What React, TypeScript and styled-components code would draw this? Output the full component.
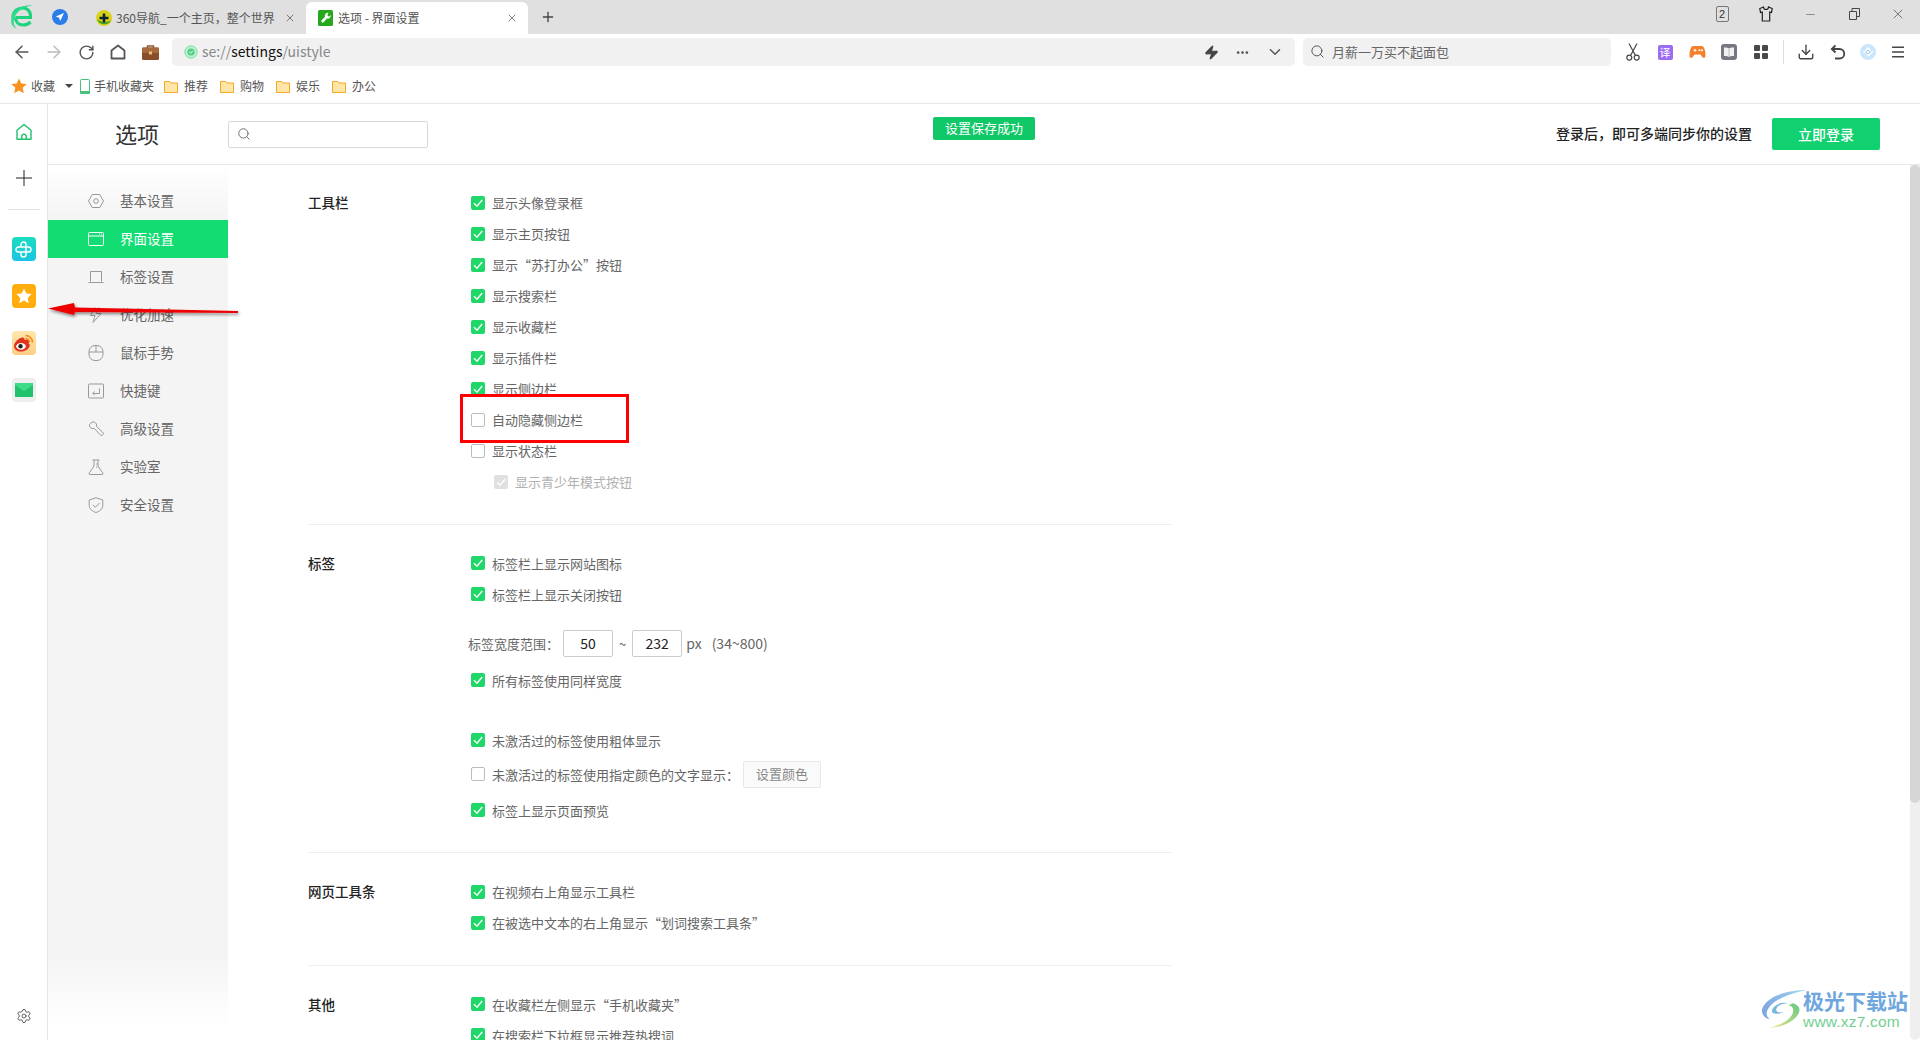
import styled, { createGlobalStyle } from 'styled-components'
import {
  ArrowLeft, ArrowRight, ChevronDown, Download, Ellipsis, Minus, Plus, RotateCw, Search, Settings, X, Zap,
} from 'lucide-react'

const GlobalStyle = createGlobalStyle`
  html, body {
    margin: 0;
    padding: 0;
    height: 1040px;
    overflow: hidden;
    background: #fff;
  }
  body {
    font-family: "Noto Sans CJK SC", "Liberation Sans", sans-serif;
    font-size: 13px;
    color: #666;
  }
  * { box-sizing: border-box; }
`

const Page = styled.div`
  position: relative;
  display: flex;
  flex-direction: column;
  width: 1920px;
  height: 1040px;
  overflow: hidden;
`

/* ---- tab strip ---- */
const TabStrip = styled.div`
  display: flex;
  align-items: flex-end;
  height: 34px;
  flex: none;
  background: #e0e0e0;
  padding-left: 10px;
`
const StripIcon = styled.div<{ $w: number; $mr: number }>`
  display: flex;
  align-items: center;
  justify-content: center;
  height: 34px;
  width: ${p => p.$w}px;
  margin-right: ${p => p.$mr}px;
  flex: none;
`
const Tab = styled.div<{ $active?: boolean }>`
  display: flex;
  align-items: center;
  width: 222px;
  height: 32px;
  flex: none;
  padding: 0 10px 0 12px;
  gap: 4px;
  font-size: 12px;
  line-height: 16px;
  color: #555;
  white-space: nowrap;
  background: ${p => (p.$active ? '#fff' : 'transparent')};
  border-radius: 6px 6px 0 0;
`
const TabTitle = styled.span`
  flex: 1;
  overflow: hidden;
`
const WindowControls = styled.div`
  display: flex;
  margin-left: auto;
  height: 34px;
`
const WindowButton = styled.div`
  display: flex;
  align-items: center;
  justify-content: center;
  width: 44px;
  height: 28px;
  color: #444;
`
const CountBadge = styled.span`
  display: block;
  width: 13px;
  height: 16px;
  border: 1px solid #777;
  border-radius: 2px;
  font-family: "Liberation Sans", sans-serif;
  font-size: 11px;
  line-height: 14px;
  text-align: center;
  color: #333;
`

/* ---- toolbar ---- */
const Toolbar = styled.div`
  display: flex;
  align-items: center;
  height: 36px;
  flex: none;
  padding-left: 6px;
  background: #fff;
`
const ToolSlot = styled.div<{ $w?: number }>`
  display: flex;
  align-items: center;
  justify-content: center;
  width: ${p => p.$w ?? 32}px;
  height: 28px;
  flex: none;
  color: #555;
`
const AddressBar = styled.div`
  display: flex;
  align-items: center;
  width: 1123px;
  height: 28px;
  margin-left: 6px;
  padding: 0 3px 0 12px;
  flex: none;
  background: #f1f1f1;
  border-radius: 5px;
`
const Url = styled.span`
  margin-left: 4px;
  padding-bottom: 2px;
  flex: 1;
  font-size: 14px;
  line-height: 18px;
  color: #888;
`
const UrlHost = styled.span`
  color: #111;
`
const SearchBar = styled.div`
  display: flex;
  align-items: center;
  width: 308px;
  height: 28px;
  margin: 0 6px 0 8px;
  padding: 0 0 1px 7px;
  gap: 7px;
  flex: none;
  background: #f1f1f1;
  border-radius: 5px;
  color: #666;
  font-size: 13px;
`
const ToolDivider = styled.div`
  width: 1px;
  height: 24px;
  margin: 0 6px;
  background: #ddd;
  flex: none;
`
const TranslateTile = styled.span`
  display: block;
  width: 15px;
  height: 15px;
  border-radius: 2px;
  background: #9b6cf3;
  color: #fff;
  font-size: 11px;
  line-height: 15px;
  text-align: center;
`

/* ---- bookmarks ---- */
const BookmarkBar = styled.div`
  display: flex;
  align-items: center;
  height: 34px;
  flex: none;
  padding: 0 0 1px 11px;
  border-bottom: 1px solid #e8e8e8;
  font-size: 12px;
  line-height: 16px;
  color: #555;
`
const Bookmark = styled.div<{ $ml?: number; $gap?: number }>`
  display: flex;
  align-items: center;
  gap: ${p => p.$gap ?? 6}px;
  margin-left: ${p => p.$ml ?? 0}px;
  white-space: nowrap;
`
const Caret = styled.span`
  width: 0;
  height: 0;
  margin-left: 10px;
  border-left: 4px solid transparent;
  border-right: 4px solid transparent;
  border-top: 4px solid #444;
`

/* ---- main frame ---- */
const Frame = styled.div`
  display: flex;
  flex: 1;
  min-height: 0;
`
const Rail = styled.aside`
  display: flex;
  flex-direction: column;
  align-items: center;
  width: 48px;
  flex: none;
  padding-top: 16px;
  border-right: 1px solid #e4e4e4;
`
const RailIcon = styled.div`
  display: flex;
  align-items: center;
  justify-content: center;
  width: 24px;
  height: 24px;
  margin-bottom: 22px;
`
const RailRule = styled.div`
  width: 32px;
  height: 1px;
  margin: -3px 0 27px;
  background: #e2e2e2;
`
const AppTile = styled.div<{ $bg: string }>`
  display: flex;
  align-items: center;
  justify-content: center;
  width: 24px;
  height: 24px;
  margin-bottom: 23px;
  border-radius: 4px;
  background: ${p => p.$bg};
`
const RailFoot = styled.div`
  display: flex;
  margin-top: auto;
  margin-bottom: 16px;
  color: #555;
`
const Workspace = styled.div`
  display: flex;
  flex-direction: column;
  flex: 1;
  min-width: 0;
`

/* ---- header ---- */
const Header = styled.header`
  position: relative;
  display: flex;
  align-items: center;
  height: 61px;
  flex: none;
  border-bottom: 1px solid #e8e8e8;
  padding-right: 40px;
`
const PageTitle = styled.h1`
  width: 180px;
  margin: 0;
  padding: 0 0 2px 67px;
  flex: none;
  font-size: 22px;
  font-weight: 400;
  line-height: 30px;
  color: #333;
`
const SearchField = styled.div`
  display: flex;
  align-items: center;
  width: 200px;
  height: 27px;
  padding-left: 8px;
  border: 1px solid #d8d8d8;
  border-radius: 2px;
  color: #555;
`
const Toast = styled.div`
  position: absolute;
  left: 885px;
  top: 13px;
  width: 102px;
  height: 23px;
  border-radius: 2px;
  background: #10c868;
  color: #fff;
  font-size: 13px;
  line-height: 22px;
  text-align: center;
`
const LoginHint = styled.span`
  margin-left: auto;
  margin-right: 20px;
  padding-bottom: 2px;
  color: #222;
  font-size: 14px;
  font-weight: 500;
`
const LoginButton = styled.button`
  width: 108px;
  height: 32px;
  padding: 0;
  border: 0;
  border-radius: 2px;
  background: #10d070;
  color: #fff;
  font: 500 14px "Noto Sans CJK SC", sans-serif;
`

/* ---- body ---- */
const Body = styled.div`
  display: flex;
  flex: 1;
  min-height: 0;
`
const Nav = styled.nav`
  width: 180px;
  flex: none;
  padding-top: 17px;
  background: linear-gradient(to bottom, #fff 0, #f4f4f4 55px, #f4f4f4 calc(100% - 85px), #fff calc(100% - 13px));
`
const NavItem = styled.div<{ $active?: boolean }>`
  display: flex;
  align-items: center;
  gap: 16px;
  height: 38px;
  padding-left: 40px;
  font-size: 13.5px;
  color: ${p => (p.$active ? '#fff' : '#666')};
  background: ${p => (p.$active ? '#13dc73' : 'transparent')};
`
const NavLabel = styled.span`
  padding-bottom: 3px;
`
const Content = styled.main`
  flex: 1;
  min-width: 0;
  padding-left: 80px;
  overflow: hidden;
`
const Section = styled.section<{ $first?: boolean; $last?: boolean }>`
  display: flex;
  width: 864px;
  padding: ${p => (p.$first ? 22 : 23)}px 0 26.5px;
  border-bottom: ${p => (p.$last ? '0' : '1px solid #efefef')};
`
const SectionName = styled.h2`
  width: 163px;
  flex: none;
  margin: 0;
  font-size: 13.5px;
  font-weight: 500;
  line-height: 31px;
  color: #222;
`
const Rows = styled.div`
  display: flex;
  flex-direction: column;
`
const Row = styled.label<{ $mt?: number; $indent?: boolean; $off?: boolean; $boxed?: boolean }>`
  position: relative;
  display: flex;
  align-items: center;
  gap: 7px;
  height: 31px;
  margin-top: ${p => p.$mt ?? 0}px;
  margin-left: ${p => (p.$indent ? 23 : 0)}px;
  font-size: 13px;
  white-space: nowrap;
  color: ${p => (p.$off ? '#b0b0b0' : '#666')};
  ${p => p.$boxed && `
    z-index: 1;
    &::before {
      content: "";
      box-sizing: border-box;
      position: absolute;
      z-index: -1;
      left: -11px;
      top: -10px;
      width: 169px;
      height: 49px;
      border: 3px solid #f00;
      background: #fff;
    }
  `}
`
const CheckBox = styled.span<{ $state: 'on' | 'off' | 'dim' }>`
  display: flex;
  align-items: center;
  justify-content: center;
  width: 14px;
  height: 14px;
  flex: none;
  border-radius: 2px;
  border: ${p => (p.$state === 'off' ? '1px solid #bbb' : '0')};
  background: ${p => (p.$state === 'on' ? '#1fd869' : p.$state === 'dim' ? '#e0e0e0' : '#fff')};
`
const RangeRow = styled.div`
  display: flex;
  align-items: center;
  height: 31px;
  margin: 18px 0 0 -3px;
  font-size: 13px;
  white-space: nowrap;
`
const RangeInput = styled.div`
  width: 50px;
  height: 27px;
  margin-left: 4px;
  border: 1px solid #ccc;
  border-radius: 2px;
  color: #222;
  font-size: 14px;
  line-height: 24px;
  text-align: center;
`
const RangeSep = styled.span`
  margin-left: 6px;
  margin-right: 2px;
`
const RangeUnit = styled.span`
  margin-left: 4px;
  font-size: 14px;
`
const RangeHint = styled.span`
  margin-left: 10px;
  font-size: 14px;
`
const ColorButton = styled.div`
  width: 78px;
  height: 27px;
  margin-left: -3px;
  border: 1px solid #e8e8e8;
  border-radius: 2px;
  background: #fafafa;
  color: #888;
  font-size: 13px;
  line-height: 24px;
  text-align: center;
`
const ScrollTrack = styled.div`
  width: 10px;
  flex: none;
  background: #efefef;
  border-radius: 0 0 5px 5px;
`
const ScrollThumb = styled.div`
  height: 638px;
  background: #d6d6d6;
  border-radius: 5px;
`

/* ---- overlays ---- */
const ArrowLayer = styled.svg`
  position: absolute;
  left: 0;
  top: 0;
  pointer-events: none;
`
const Watermark = styled.div`
  position: absolute;
  left: 1761px;
  top: 989px;
  display: flex;
`
const WatermarkText = styled.div`
  display: flex;
  flex-direction: column;
  margin: -1px 0 0 -4px;
`
const WatermarkName = styled.span`
  font-size: 21px;
  font-weight: 700;
  line-height: 25px;
  color: #6ea6dd;
  white-space: nowrap;
`
const WatermarkUrl = styled.span`
  font-family: "Liberation Sans", sans-serif;
  font-size: 15.5px;
  line-height: 18px;
  letter-spacing: 0.2px;
  color: #72cf92;
`

/* ---- drawings ---- */
const Tick = ({ color = '#fff' }: { color?: string }) => (
  <svg width="12" height="12" viewBox="0 0 12 12" fill="none" stroke={color} strokeWidth="1.3">
    <path d="M2 6.2 5 9.2 10.2 3" />
  </svg>
)
const Check = ({ state = 'on' }: { state?: 'on' | 'off' | 'dim' }) => (
  <CheckBox $state={state}>{state !== 'off' && <Tick />}</CheckBox>
)
const Folder = () => (
  <svg width="14" height="13" viewBox="0 0 14 13">
    <path d="M.5 1.5h5l1.5 1.5h6.5v9.500h-13z" fill="#ffe6a8" stroke="#f5a623" />
  </svg>
)
const BrowserLogo = () => (
  <svg width="24" height="30" viewBox="0 0 24 30" fill="none">
    <path d="M3 15.500C3 9 8 6 12.500 6c5 0 8.500 3.500 8 9.500H5.500" stroke="#1fd37c" strokeWidth="3.200" />
    <path d="M5.500 15.500c0 5 3.500 7.500 7.500 7.500 3 0 5.500-1 7.500-3" stroke="#1fd37c" strokeWidth="3.200" />
    <path d="M23 3C15 2.500 4 6 1.500 15.500c-1 4.500 0 9 5 11-3-3-3.500-7-2-11C6.500 9 15 4.500 23 3z" fill="#2edb8b" />
  </svg>
)
const PinnedIcon = () => (
  <svg width="16" height="16" viewBox="0 0 16 16">
    <circle cx="8" cy="8" r="8" fill="#2a7de8" />
    <path d="M12 4 3.800 7.600l3.300 1.100 1.100 3.300z" fill="#fff" />
  </svg>
)
const Nav360 = () => (
  <svg width="16" height="16" viewBox="0 0 16 16">
    <circle cx="8" cy="8" r="8" fill="#d9d21a" />
    <path d="M1 9a7.500 7.500 0 0 0 14 1c-3 3-10 3-14-1z" fill="#3f9e28" />
    <path d="M8 3.500v9M3.500 8h9" stroke="#123" strokeWidth="2.600" />
  </svg>
)
const SettingsFavicon = () => (
  <svg width="16" height="16" viewBox="0 0 16 16">
    <rect width="15" height="16" rx="1.500" fill="#27a81c" />
    <path d="M10.500 2.800a3 3 0 0 0-3.500 3.900L3 11l1.800 1.900 4.200-4.300a3 3 0 0 0 3.700-3.600L11 6.700 9.400 5.200z" fill="#fff" />
  </svg>
)
const HomeOutline = ({ color = '#555', size = 18 }: { color?: string; size?: number }) => (
  <svg width={size} height={size} viewBox="0 0 18 18" fill="none" stroke={color} strokeWidth="1.400">
    <path d="M2 16.300V7.300L9 1.500l7 5.800v9z" strokeLinejoin="round" />
    <path d="M6.800 16.300v-3a2.200 2.200 0 0 1 4.400 0v3" />
  </svg>
)
const ToolbarHome = () => (
  <svg width="16" height="16" viewBox="0 0 16 16" fill="none" stroke="#555" strokeWidth="1.800">
    <path d="M1.500 14.500V6.500L8 1.500l6.500 5v8z" strokeLinejoin="round" />
  </svg>
)
const Briefcase = () => (
  <svg width="17" height="15" viewBox="0 0 17 15">
    <path d="M5.500 3V1h6v2" fill="none" stroke="#8c5a33" strokeWidth="1.400" />
    <rect y="2.500" width="17" height="12.500" rx="1.500" fill="#8a4f2a" />
    <rect y="2.500" width="17" height="5.500" rx="1" fill="#a8693d" />
    <rect x="7" y="6.500" width="3" height="3" fill="#e9c27d" />
  </svg>
)
const SecureDot = () => (
  <svg width="14" height="14" viewBox="0 0 14 14" fill="none">
    <circle cx="7" cy="7" r="6.200" fill="#bdf0cf" stroke="#7fe0a4" />
    <circle cx="7" cy="7" r="3.600" fill="#4fcf83" />
    <path d="M5.300 7 6.600 8.200 8.800 5.900" stroke="#fff" />
  </svg>
)
const ScissorsUp = () => (
  <svg width="14" height="18" viewBox="0 0 14 18" fill="none" stroke="#444" strokeWidth="1.200">
    <path d="M3 .5 9.300 12.300M11 .5 4.700 12.300" />
    <circle cx="3.300" cy="14.600" r="2.500" />
    <circle cx="10.700" cy="14.600" r="2.500" />
  </svg>
)
const UndoArrow = () => (
  <svg width="16" height="16" viewBox="0 0 16 16" fill="none" stroke="#444" strokeWidth="1.800">
    <path d="M5.500 1.500 1.800 5l3.700 3.500" />
    <path d="M2 5h7.500a4.500 4.500 0 0 1 0 9.500H5" />
  </svg>
)
const GamePad = () => (
  <svg width="17" height="14" viewBox="0 0 17 14">
    <path d="M4.500 1h8c2 0 3 2 3.700 5.500.6 3.500.4 6.500-1.200 6.500-1.800 0-2.500-3-4-3.500h-5C4.500 10 3.800 13 2 13 .4 13 .2 10 .8 6.500 1.500 3 2.500 1 4.500 1z" fill="#f57f2a" />
    <path d="M4.500 5.300h3M6 3.800v3" stroke="#fff" />
    <circle cx="10.500" cy="5.300" r="1" fill="#fff" />
    <circle cx="13" cy="5.300" r="1" fill="#fff" />
  </svg>
)
const BookTile = () => (
  <svg width="16" height="16" viewBox="0 0 16 16">
    <rect width="16" height="16" rx="3" fill="#77787f" />
    <path d="M8 4.500C6.500 3.500 4.500 3.300 3 3.500v8.500c1.500-.2 3.500 0 5 1 1.500-1 3.500-1.200 5-1V3.500c-1.500-.2-3.500 0-5 1z" fill="#f2f2f2" />
    <path d="M8 4.500V13" stroke="#aaa" strokeWidth=".7" />
  </svg>
)
const AppsGrid = () => (
  <svg width="14" height="14" viewBox="0 0 14 14" fill="#484848">
    <rect width="6" height="6" rx="1" />
    <rect x="8" width="6" height="6" rx="1" />
    <rect y="8" width="6" height="6" rx="1" />
    <rect x="8" y="8" width="6" height="6" rx="1" />
  </svg>
)
const SwirlBall = () => (
  <svg width="16" height="16" viewBox="0 0 16 16" fill="none">
    <circle cx="8" cy="8" r="8" fill="#cbe6fb" />
    <path d="M3.500 9 8 4l2 2-3.500 3.500 2 2L13 7" stroke="#fff" strokeWidth="1.400" />
    <path d="M5.500 8.500 8 6l2 2-2 2z" stroke="#8fc4ee" strokeWidth=".8" />
  </svg>
)
const Hamburger = () => (
  <svg width="12" height="12" viewBox="0 0 12 12" stroke="#444" strokeWidth="1.600">
    <path d="M0 1.200h12M0 6h12M0 10.800h12" />
  </svg>
)
const Shirt = () => (
  <svg width="14" height="16" viewBox="0 0 14 16" fill="none" stroke="#222" strokeWidth="1.200">
    <path d="M4.500 1 .8 2.500l.7 4 1.800-.4V15h7.400V6.100l1.800.4.700-4L9.500 1a2.500 2.500 0 0 1-5 0z" />
  </svg>
)
const Restore = () => (
  <svg width="11" height="12" viewBox="0 0 11 12" fill="none" stroke="#444">
    <path d="M.5 3.500h7v8h-7zM3 3.500V.5h7.500v8h-3" />
  </svg>
)
const NavSvg = ({ children, color = '#999' }: { children: React.ReactNode; color?: string }) => (
  <svg width="16" height="16" viewBox="0 0 16 16" fill="none" stroke={color} strokeWidth="1" style={{ flex: 'none' }}>
    {children}
  </svg>
)
const StarGlyph = ({ size, fill }: { size: number; fill: string }) => (
  <svg width={size} height={size} viewBox="0 0 16 16" fill={fill}>
    <path d="M8 .5l2.300 5 5.400.6-4 3.700 1.100 5.400L8 12.500l-4.800 2.700 1.100-5.400-4-3.700 5.400-.6z" />
  </svg>
)
const Clover = () => (
  <svg width="17" height="17" viewBox="0 0 17 17" fill="none" stroke="#fff" strokeWidth="1.400">
    <path d="M6 6V3.500a2.500 2.500 0 0 1 5 0V11" />
    <path d="M6 6h7.500a2.500 2.500 0 0 1 0 5H6" />
    <path d="M6 6H3.500a2.500 2.500 0 0 0 0 5H6v2.500a2.500 2.500 0 0 0 5 0V11" />
  </svg>
)
const Weibo = () => (
  <svg width="21" height="18" viewBox="0 0 21 18" fill="none">
    <path d="M1 12c0-4 6-9 9-8.500 2 .4 1.500 2.500 1.500 2.500s4-1 4.500 1.500c.2 1-.6 1.700-.6 1.700 1.600.8 1.600 2.300 1 3.500C15 15.500 11.500 17.500 8 17.500 4 17.500 1 15.500 1 12z" fill="#e2311d" />
    <ellipse cx="8" cy="12.300" rx="4.800" ry="3.400" fill="#fff" />
    <circle cx="7.500" cy="12.300" r="2.200" fill="#222" />
    <path d="M12.500 4.500a4 4 0 0 1 4 4M12.500 1.500a7 7 0 0 1 7 7" stroke="#f58a1f" strokeWidth="1.600" />
  </svg>
)
const Envelope = () => (
  <svg width="18" height="14" viewBox="0 0 18 14">
    <rect width="18" height="14" fill="#22c16d" />
    <path d="M0 0h18v2L9 8 0 2z" fill="#3ddc8a" />
  </svg>
)
const WatermarkSwirl = () => (
  <svg width="46" height="40" viewBox="0 0 42 42" preserveAspectRatio="none">
    <defs>
      <linearGradient id="wmA" x1="0" y1="0" x2="1" y2="0">
        <stop offset="0" stopColor="#7ba6e2" />
        <stop offset="1" stopColor="#a8dcf0" />
      </linearGradient>
      <linearGradient id="wmB" x1="0" y1="1" x2="1" y2="0">
        <stop offset="0" stopColor="#efe48a" />
        <stop offset="1" stopColor="#63c97f" />
      </linearGradient>
    </defs>
    <path d="M42 1C26 1 6 6 1 21c-1 6 3 10 7 11-3-3-4-7-1-12C12 11 28 4 42 1z" fill="url(#wmA)" />
    <path d="M29 15c6 2 8 7 4 13-5 8-15 12-25 13 9-3 19-8 21-16 1-4 0-7-4-8z" fill="url(#wmB)" />
    <path d="M10 22c2-6 10-9 15-7-5 0-10 2-11 6-1 3 3 5 7 3-3 3-12 3-11-2z" fill="#79b9e0" />
  </svg>
)

const NAV_ITEMS: { label: string; icon: React.ReactNode }[] = [
  { label: '基本设置', icon: <><path d="M4.200 1.500h7.600L15.500 8l-3.700 6.500H4.200L.5 8z" /><circle cx="8" cy="8" r="2.300" /></> },
  { label: '界面设置', icon: <><rect x=".5" y="1.500" width="15" height="13" rx="1" /><path d="M.5 5h15M11 3.200h.8M13 3.200h.8" /></> },
  { label: '标签设置', icon: <path d="M2.500 12.500V2.500h11v10M.5 13.500h15" /> },
  { label: '优化加速', icon: <path d="M7 .5 2.500 8.500H7l-2 7 8-9H8.500L11 .5" /> },
  { label: '鼠标手势', icon: <><rect x="1" y=".5" width="14" height="15" rx="6" /><path d="M1 7h14M8 .5V7" /></> },
  { label: '快捷键', icon: <><rect x=".5" y="1" width="15" height="14" rx="1" /><path d="M11.500 5.500v5H5M6.500 8.500 4.800 10.500l1.700 1.500" /></> },
  { label: '高级设置', icon: <path d="M1.500 3.500 4 1h2.500l2 2v2.500l6 5.500c1 1 1 2 .3 2.800-.8.800-1.800.8-2.800-.2l-5.500-6H4L1.500 5.500z" /> },
  { label: '实验室', icon: <path d="M4.500 1h7M6 1v6L1 14.500c0 .5.300 1 1 1h12c.7 0 1-.5 1-1L10 7V1M8 5h1.500M8 8h1.500" /> },
  { label: '安全设置', icon: <><path d="M8 .7 14.800 3v5.500c0 3.300-3 5.800-6.800 7-3.800-1.200-6.800-3.700-6.800-7V3z" /><path d="M4.800 7.800 7.300 10.300 11.500 6" /></> },
]

const CheckRow = ({ text, state = 'on', mt, indent, boxed }: { text: string; state?: 'on' | 'off' | 'dim'; mt?: number; indent?: boolean; boxed?: boolean }) => (
  <Row $mt={mt} $indent={indent} $off={state === 'dim'} $boxed={boxed}>
    <Check state={state} />
    {text}
  </Row>
)

export default function App() {
  return (
    <Page>
      <GlobalStyle />
      <TabStrip>
        <StripIcon $w={24} $mr={17}><BrowserLogo /></StripIcon>
        <StripIcon $w={18} $mr={15}><PinnedIcon /></StripIcon>
        <Tab>
          <Nav360 />
          <TabTitle>360导航_一个主页，整个世界</TabTitle>
          <X size={12} color="#555" strokeWidth={1.5} />
        </Tab>
        <Tab $active>
          <SettingsFavicon />
          <TabTitle>选项 - 界面设置</TabTitle>
          <X size={12} color="#555" strokeWidth={1.5} />
        </Tab>
        <StripIcon $w={40} $mr={0}><Plus size={16} color="#444" strokeWidth={2} /></StripIcon>
        <WindowControls>
          <WindowButton><CountBadge>2</CountBadge></WindowButton>
          <WindowButton><Shirt /></WindowButton>
          <WindowButton><Minus size={13} strokeWidth={1} /></WindowButton>
          <WindowButton><Restore /></WindowButton>
          <WindowButton><X size={16} strokeWidth={1} /></WindowButton>
        </WindowControls>
      </TabStrip>

      <Toolbar>
        <ToolSlot><ArrowLeft size={20} strokeWidth={1.8} /></ToolSlot>
        <ToolSlot><ArrowRight size={20} strokeWidth={1.8} color="#bbb" /></ToolSlot>
        <ToolSlot><RotateCw size={17} strokeWidth={2} /></ToolSlot>
        <ToolSlot><ToolbarHome /></ToolSlot>
        <ToolSlot><Briefcase /></ToolSlot>
        <AddressBar>
          <SecureDot />
          <Url>se://<UrlHost>settings</UrlHost>/uistyle</Url>
          <ToolSlot $w={30}><Zap size={15} fill="#444" color="#444" /></ToolSlot>
          <ToolSlot $w={32}><Ellipsis size={15} strokeWidth={2.4} /></ToolSlot>
          <ToolSlot $w={34}><ChevronDown size={18} strokeWidth={2} /></ToolSlot>
        </AddressBar>
        <SearchBar>
          <Search size={15} strokeWidth={1.4} color="#444" />
          月薪一万买不起面包
        </SearchBar>
        <ToolSlot><ScissorsUp /></ToolSlot>
        <ToolSlot><TranslateTile>译</TranslateTile></ToolSlot>
        <ToolSlot><GamePad /></ToolSlot>
        <ToolSlot><BookTile /></ToolSlot>
        <ToolSlot><AppsGrid /></ToolSlot>
        <ToolDivider />
        <ToolSlot><Download size={18} strokeWidth={1.8} color="#444" /></ToolSlot>
        <ToolSlot><UndoArrow /></ToolSlot>
        <ToolSlot $w={28}><SwirlBall /></ToolSlot>
        <ToolSlot><Hamburger /></ToolSlot>
      </Toolbar>

      <BookmarkBar>
        <Bookmark $gap={4}><StarGlyph size={16} fill="#f7931e" />收藏</Bookmark>
        <Caret />
        <Bookmark $ml={7} $gap={4}>
          <svg width="10" height="15" viewBox="0 0 10 15" fill="none">
            <rect x=".5" y=".5" width="9" height="14" rx="1" fill="#fff" stroke="#47c27a" />
            <path d="M0 12h10v2a1 1 0 0 1-1 1H1a1 1 0 0 1-1-1z" fill="#47c27a" />
          </svg>
          手机收藏夹
        </Bookmark>
        <Bookmark $ml={10}><Folder />推荐</Bookmark>
        <Bookmark $ml={12}><Folder />购物</Bookmark>
        <Bookmark $ml={12}><Folder />娱乐</Bookmark>
        <Bookmark $ml={12}><Folder />办公</Bookmark>
      </BookmarkBar>

      <Frame>
        <Rail>
          <RailIcon><HomeOutline color="#1fc16b" /></RailIcon>
          <RailIcon>
            <svg width="18" height="18" viewBox="0 0 18 18" stroke="#222"><path d="M9 1v16M1 9h16" /></svg>
          </RailIcon>
          <RailRule />
          <AppTile $bg="linear-gradient(#1bdcc0, #1bc4e4)"><Clover /></AppTile>
          <AppTile $bg="#ffad0f"><StarGlyph size={16} fill="#fff" /></AppTile>
          <AppTile $bg="linear-gradient(#ffe6ad, #ffce85)"><Weibo /></AppTile>
          <AppTile $bg="#eeeeee"><Envelope /></AppTile>
          <RailFoot><Settings size={16} strokeWidth={1.4} /></RailFoot>
        </Rail>

        <Workspace>
          <Header>
            <PageTitle>选项</PageTitle>
            <SearchField><Search size={14} strokeWidth={1.4} /></SearchField>
            <Toast>设置保存成功</Toast>
            <LoginHint>登录后，即可多端同步你的设置</LoginHint>
            <LoginButton>立即登录</LoginButton>
          </Header>

          <Body>
            <Nav>
              {NAV_ITEMS.map((item, i) => (
                <NavItem key={item.label} $active={i === 1}>
                  <NavSvg color={i === 1 ? '#fff' : '#999'}>{item.icon}</NavSvg>
                  <NavLabel>{item.label}</NavLabel>
                </NavItem>
              ))}
            </Nav>

            <Content>
              <Section $first>
                <SectionName>工具栏</SectionName>
                <Rows>
                  <CheckRow text="显示头像登录框" />
                  <CheckRow text="显示主页按钮" />
                  <CheckRow text="显示“苏打办公”按钮" />
                  <CheckRow text="显示搜索栏" />
                  <CheckRow text="显示收藏栏" />
                  <CheckRow text="显示插件栏" />
                  <CheckRow text="显示侧边栏" />
                  <CheckRow text="自动隐藏侧边栏" state="off" boxed />
                  <CheckRow text="显示状态栏" state="off" />
                  <CheckRow text="显示青少年模式按钮" state="dim" indent />
                </Rows>
              </Section>

              <Section>
                <SectionName>标签</SectionName>
                <Rows>
                  <CheckRow text="标签栏上显示网站图标" />
                  <CheckRow text="标签栏上显示关闭按钮" />
                  <RangeRow>
                    标签宽度范围：
                    <RangeInput>50</RangeInput>
                    <RangeSep>~</RangeSep>
                    <RangeInput>232</RangeInput>
                    <RangeUnit>px</RangeUnit>
                    <RangeHint>(34~800)</RangeHint>
                  </RangeRow>
                  <CheckRow text="所有标签使用同样宽度" mt={6} />
                  <CheckRow text="未激活过的标签使用粗体显示" mt={29} />
                  <Row $mt={3}>
                    <Check state="off" />
                    未激活过的标签使用指定颜色的文字显示：
                    <ColorButton>设置颜色</ColorButton>
                  </Row>
                  <CheckRow text="标签上显示页面预览" mt={5} />
                </Rows>
              </Section>

              <Section>
                <SectionName>网页工具条</SectionName>
                <Rows>
                  <CheckRow text="在视频右上角显示工具栏" />
                  <CheckRow text="在被选中文本的右上角显示“划词搜索工具条”" />
                </Rows>
              </Section>

              <Section $last>
                <SectionName>其他</SectionName>
                <Rows>
                  <CheckRow text="在收藏栏左侧显示“手机收藏夹”" />
                  <CheckRow text="在搜索栏下拉框显示推荐热搜词" />
                </Rows>
              </Section>
            </Content>

            <ScrollTrack><ScrollThumb /></ScrollTrack>
          </Body>
        </Workspace>
      </Frame>

      <ArrowLayer width="1920" height="1040" viewBox="0 0 1920 1040">
        <defs>
          <filter id="arrowShadow" x="-10%" y="-100%" width="120%" height="300%">
            <feDropShadow dx="1" dy="2" stdDeviation="1.500" floodColor="#000" floodOpacity=".45" />
          </filter>
        </defs>
        <path d="M48 308.500 74 303l1 4.500 163 3.500v2l-163-1 -1 3z" fill="#ee0000" filter="url(#arrowShadow)" />
      </ArrowLayer>

      <Watermark>
        <WatermarkSwirl />
        <WatermarkText>
          <WatermarkName>极光下载站</WatermarkName>
          <WatermarkUrl>www.xz7.com</WatermarkUrl>
        </WatermarkText>
      </Watermark>
    </Page>
  )
}
